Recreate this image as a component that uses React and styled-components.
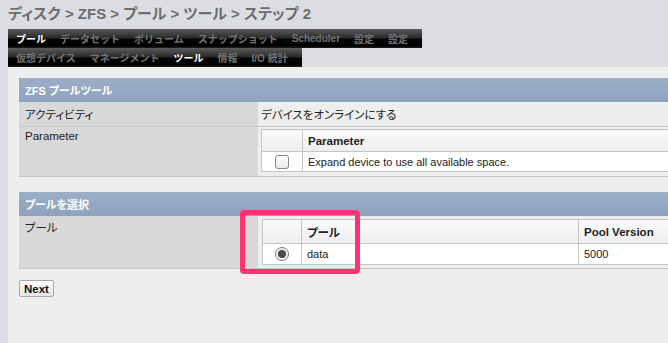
import React from 'react';
import styled, { createGlobalStyle } from 'styled-components';

const GlobalStyle = createGlobalStyle`
  html, body {
    margin: 0;
    padding: 0;
    background: #dcdde2;
    overflow: hidden;
  }
  body {
    font-family: "Liberation Sans", "Noto Sans CJK JP", sans-serif;
    font-feature-settings: "palt";
    color: #222;
  }
`;

const Page = styled.div`
  padding-left: 8px;
  width: 900px;
`;

const Breadcrumb = styled.h1`
  margin: 0;
  height: 29px;
  padding-top: 4px;
  box-sizing: border-box;
  font-size: 15px;
  font-weight: bold;
  color: #6e6e6e;
  line-height: 20px;
`;

const NavBar = styled.div`
  display: flex;
  align-items: center;
  width: ${(p) => p.$width}px;
  height: 19px;
  padding-left: 1px;
  box-sizing: border-box;
  overflow: hidden;
  background: linear-gradient(#5c5c5c 0%, #2a2a2a 45%, #050505 55%, #000 90%, #222 100%);
`;

const NavItem = styled.span`
  padding: 0 7px;
  font-size: 10px;
  font-weight: bold;
  white-space: nowrap;
  font-feature-settings: normal;
  color: ${(p) => (p.$active ? '#ffffff' : '#737373')};
`;

const Content = styled.div`
  background: #eeeeee;
  padding: 11px 0 60px 11px;
`;

const Section = styled.div`
  position: relative;
  width: 760px;
  margin-bottom: ${(p) => p.$gap || 0}px;
  border-bottom: 1px solid #c6c6c6;
`;

const SectionHeader = styled.div`
  height: 24px;
  padding-left: 6px;
  display: flex;
  align-items: center;
  background: linear-gradient(#9caec7, #8fa3bf);
  color: #fff;
  font-size: 11px;
  font-weight: bold;
`;

const Row = styled.div`
  display: grid;
  grid-template-columns: 239px 1fr;
  min-height: ${(p) => p.$height}px;
  border-bottom: ${(p) => (p.$divided ? '1px solid #c9c9c9' : 'none')};
`;

const Label = styled.div`
  background: #d8d8d8;
  padding: ${(p) => (p.$top ? '3px' : '0')} 6px 0;
  display: flex;
  align-items: ${(p) => (p.$top ? 'flex-start' : 'center')};
  font-size: 11.5px;
  color: #222;
`;

const Value = styled.div`
  padding: ${(p) => p.$pad || '0 3px'};
  display: flex;
  align-items: center;
  font-size: 11.5px;
`;

const InnerTable = styled.table`
  border-collapse: collapse;
  width: 100%;
  font-size: 11px;
`;

const HeadCell = styled.th`
  height: ${(p) => p.$h}px;
  width: ${(p) => (p.$w ? `${p.$w}px` : 'auto')};
  padding: 0 5px;
  box-sizing: border-box;
  text-align: left;
  font-weight: bold;
  font-size: 11.5px;
  background: linear-gradient(#fbfbfb, #ededed);
  border: 1px solid #c6c6c6;
`;

const Cell = styled.td`
  height: ${(p) => p.$h}px;
  padding: 0 5px;
  box-sizing: border-box;
  background: #fff;
  border: 1px solid #c6c6c6;
  text-align: ${(p) => (p.$center ? 'center' : 'left')};
  vertical-align: middle;
`;

const Checkbox = styled.span`
  display: inline-block;
  width: 12px;
  height: 12px;
  border: 1px solid #8a8a8a;
  border-radius: 3px;
  background: linear-gradient(#ffffff, #eaeaea);
  vertical-align: middle;
`;

const Radio = styled.span`
  display: inline-flex;
  align-items: center;
  justify-content: center;
  width: 12px;
  height: 12px;
  border: 1px solid #7a7a7a;
  border-radius: 50%;
  background: #f4f4f4;
  vertical-align: middle;

  &::after {
    content: '';
    width: 8px;
    height: 8px;
    border-radius: 50%;
    background: #4a4a4a;
  }
`;

const Highlight = styled.div`
  position: absolute;
  left: 221px;
  top: 18px;
  width: 120px;
  height: 64px;
  box-sizing: border-box;
  border: 5px solid #fe3370;
  border-radius: 4px;
  pointer-events: none;
`;

const NextButton = styled.button`
  margin-top: 11px;
  height: 17px;
  padding: 0 4px;
  font-family: "Liberation Sans", sans-serif;
  font-size: 11.5px;
  font-weight: bold;
  color: #111;
  background: linear-gradient(#ffffff, #e4e4e4);
  border: 1px solid #a8a8a8;
  border-radius: 2px;
  line-height: 14px;
`;

const topNav = ['プール', 'データセット', 'ボリューム', 'スナップショット', 'Scheduler', '設定', '設定'];
const subNav = ['仮想デバイス', 'マネージメント', 'ツール', '情報', 'I/O 統計'];

export default function App() {
  return (
    <>
      <GlobalStyle />
      <Page>
        <Breadcrumb>ディスク &gt; ZFS &gt; プール &gt; ツール &gt; ステップ 2</Breadcrumb>
        <NavBar $width={414}>
          {topNav.map((item, i) => (
            <NavItem key={i} $active={i === 0}>{item}</NavItem>
          ))}
        </NavBar>
        <NavBar $width={294}>
          {subNav.map((item, i) => (
            <NavItem key={i} $active={i === 2}>{item}</NavItem>
          ))}
        </NavBar>
        <Content>
          <Section $gap={15}>
            <SectionHeader>ZFS プールツール</SectionHeader>
            <Row $height={24} $divided>
              <Label>アクティビティ</Label>
              <Value>デバイスをオンラインにする</Value>
            </Row>
            <Row $height={48}>
              <Label $top>Parameter</Label>
              <Value $pad="2px 3px 4px">
                <InnerTable>
                  <thead>
                    <tr>
                      <HeadCell $h={22} $w={41} />
                      <HeadCell $h={22}>Parameter</HeadCell>
                    </tr>
                  </thead>
                  <tbody>
                    <tr>
                      <Cell $h={20} $center><Checkbox /></Cell>
                      <Cell $h={20}>Expand device to use all available space.</Cell>
                    </tr>
                  </tbody>
                </InnerTable>
              </Value>
            </Row>
          </Section>

          <Section>
            <SectionHeader>プールを選択</SectionHeader>
            <Row $height={52}>
              <Label $top>プール</Label>
              <Value $pad="3px 3px 3px 4px">
                <InnerTable>
                  <thead>
                    <tr>
                      <HeadCell $h={24} $w={39} />
                      <HeadCell $h={24} $w={277}>プール</HeadCell>
                      <HeadCell $h={24}>Pool Version</HeadCell>
                    </tr>
                  </thead>
                  <tbody>
                    <tr>
                      <Cell $h={21} $center><Radio /></Cell>
                      <Cell $h={21}>data</Cell>
                      <Cell $h={21}>5000</Cell>
                    </tr>
                  </tbody>
                </InnerTable>
              </Value>
            </Row>
            <Highlight />
          </Section>

          <NextButton>Next</NextButton>
        </Content>
      </Page>
    </>
  );
}
